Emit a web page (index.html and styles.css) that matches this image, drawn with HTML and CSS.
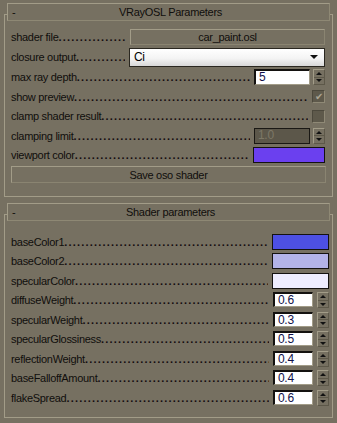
FILE: index.html
```html
<!DOCTYPE html>
<html lang="en">

<head>
  <meta charset="UTF-8">
  <meta name="viewport" content="width=device-width, initial-scale=1.0">
  <title>VRayOSL</title>
  <link rel="stylesheet" href="styles.css">
</head>

<body>
  <div class="rollout">
    <div class="rollout-head">
      <span class="toggle">-</span>
      <span class="title">VRayOSL Parameters</span>
    </div>
    <div class="rollout-body main">
      <div class="row">
        <span class="label">shader file</span><span class="dots"></span>
        <button class="btn file-btn">car_paint.osl</button>
      </div>
      <div class="row">
        <span class="label">closure output</span><span class="dots"></span>
        <div class="dropdown"><span>Ci</span><span class="drop-arrow"></span></div>
      </div>
      <div class="row">
        <span class="label">max ray depth</span><span class="dots"></span>
        <div class="spinner wide">
          <span class="field">5</span>
          <span class="spin"><span class="up"></span><span class="down"></span></span>
        </div>
      </div>
      <div class="row">
        <span class="label">show preview</span><span class="dots"></span>
        <span class="check checked">&#10004;</span>
      </div>
      <div class="row">
        <span class="label">clamp shader result</span><span class="dots"></span>
        <span class="check"></span>
      </div>
      <div class="row">
        <span class="label">clamping limit</span><span class="dots"></span>
        <div class="spinner wide disabled">
          <span class="field">1.0</span>
          <span class="spin"><span class="up"></span><span class="down"></span></span>
        </div>
      </div>
      <div class="row">
        <span class="label">viewport color</span><span class="dots"></span>
        <span class="swatch wide" style="background:#6b40ef"></span>
      </div>
      <button class="btn save-btn">Save oso shader</button>
    </div>
  </div>

  <div class="rollout second">
    <div class="rollout-head">
      <span class="toggle">-</span>
      <span class="title">Shader parameters</span>
    </div>
    <div class="rollout-body params">
      <div class="row">
        <span class="label">baseColor1</span><span class="dots"></span>
        <span class="swatch" style="background:#4d50e3"></span>
      </div>
      <div class="row">
        <span class="label">baseColor2</span><span class="dots"></span>
        <span class="swatch" style="background:#b3b3e8"></span>
      </div>
      <div class="row">
        <span class="label">specularColor</span><span class="dots"></span>
        <span class="swatch" style="background:#eeedff"></span>
      </div>
      <div class="row">
        <span class="label">diffuseWeight</span><span class="dots"></span>
        <div class="spinner"><span class="field">0.6</span><span class="spin"><span class="up"></span><span class="down"></span></span></div>
      </div>
      <div class="row">
        <span class="label">specularWeight</span><span class="dots"></span>
        <div class="spinner"><span class="field">0.3</span><span class="spin"><span class="up"></span><span class="down"></span></span></div>
      </div>
      <div class="row">
        <span class="label">specularGlossiness</span><span class="dots"></span>
        <div class="spinner"><span class="field">0.5</span><span class="spin"><span class="up"></span><span class="down"></span></span></div>
      </div>
      <div class="row">
        <span class="label">reflectionWeight</span><span class="dots"></span>
        <div class="spinner"><span class="field">0.4</span><span class="spin"><span class="up"></span><span class="down"></span></span></div>
      </div>
      <div class="row">
        <span class="label">baseFalloffAmount</span><span class="dots"></span>
        <div class="spinner"><span class="field">0.4</span><span class="spin"><span class="up"></span><span class="down"></span></span></div>
      </div>
      <div class="row">
        <span class="label">flakeSpread</span><span class="dots"></span>
        <div class="spinner"><span class="field">0.6</span><span class="spin"><span class="up"></span><span class="down"></span></span></div>
      </div>
    </div>
  </div>
</body>

</html>
```

FILE: styles.css
```css
body {
  margin: 0;
  background: #767061;
  font: 11px "Liberation Sans", Arial, sans-serif;
  letter-spacing: -0.3px;
  color: #100e0c;
}

.rollout {
  margin: 14px 4px 0;
  border: 1px solid #a29c88;
}

.rollout.second {
  margin-top: 17px;
}

.rollout-head {
  display: flex;
  align-items: center;
  height: 16px;
  margin: -12px 2px 0;
  background: #767061;
  border: 1px solid #a29c88;
  border-right-color: #8e8874;
  border-bottom-color: #8e8874;
}

.toggle {
  width: 0;
  padding-left: 4px;
  white-space: nowrap;
}

.title {
  flex: 1;
  text-align: center;
}

.rollout-body {
  padding: 6px 6px 13px;
}

.main .row {
  height: 20px;
  padding-right: 1px;
}

.main .row:nth-child(n+4) {
  height: 19.5px;
}

.params {
  padding: 11px 3px 9px 6px;
}

.params .row {
  height: 19.5px;
}

.row {
  display: flex;
  align-items: center;
}

.label {
  white-space: nowrap;
}

/* dotted leader made of periods, cut off where the control starts */
.dots {
  flex: 1;
  min-width: 0;
  margin-right: 4px;
  overflow: hidden;
  white-space: nowrap;
  letter-spacing: 1.2px;
  color: #140c10;
  font-weight: bold;
}

.dots::before {
  content: "..........................................................................";
}

.btn {
  font: inherit;
  letter-spacing: inherit;
  color: inherit;
  background: #767061;
  border: 1px solid #a29c88;
  border-right-color: #8a8471;
  border-bottom-color: #8a8471;
  padding: 0;
}

.file-btn {
  width: 195px;
  height: 16px;
  margin-top: -1px;
}

.save-btn {
  display: block;
  width: 100%;
  height: 17px;
  margin-top: 1px;
}

.dropdown {
  display: flex;
  align-items: center;
  justify-content: space-between;
  box-sizing: border-box;
  width: 196px;
  height: 19px;
  padding: 0 4px;
  border: 1px solid #2a2720;
  background: linear-gradient(#ffffff, #f4f4f4 55%, #d8d8d8);
  color: #000;
  font-size: 12px;
}

.drop-arrow {
  border-left: 4px solid transparent;
  border-right: 4px solid transparent;
  border-top: 4px solid #111;
  margin-right: 2px;
}

.spinner {
  display: flex;
  gap: 4px;
}

.field {
  box-sizing: border-box;
  width: 40px;
  height: 15px;
  padding-left: 3px;
  background: #fff;
  border-top: 2px solid #141210;
  border-left: 2px solid #141210;
  border-right: 1px solid #a29c88;
  border-bottom: 1px solid #a29c88;
  font-size: 12px;
  line-height: 12px;
  color: #10104a;
}

.spinner.wide .field {
  width: 56px;
  height: 16px;
}

.spinner.wide {
  gap: 3px;
}

.spinner.disabled .field {
  background: #5c574a;
  border: 1px solid #1a1814;
  color: #7d7867;
}

.spin {
  box-sizing: border-box;
  display: flex;
  flex-direction: column;
  width: 12px;
  height: 16px;
  border: 1px solid #a29c88;
  border-right-color: #5d5849;
  border-bottom-color: #5d5849;
}

.spin span {
  flex: 1;
  display: flex;
  align-items: center;
  justify-content: center;
}

.spin .up {
  border-bottom: 1px solid #5d5849;
}

.spin .up::after,
.spin .down::after {
  content: "";
  border-left: 3px solid transparent;
  border-right: 3px solid transparent;
}

.spin .up::after {
  border-bottom: 3px solid #111;
}

.spin .down::after {
  border-top: 3px solid #111;
}

.check {
  box-sizing: border-box;
  width: 13px;
  height: 13px;
  background: #5e594b;
  border: 1px solid #8f8976;
  border-top-color: #4c483c;
  border-left-color: #4c483c;
  color: #aaa493;
  font-size: 10px;
  line-height: 11px;
  text-align: center;
  letter-spacing: 0;
}

.swatch {
  box-sizing: border-box;
  width: 57px;
  height: 16px;
  border: 1px solid #141210;
}

.swatch.wide {
  width: 72px;
}
```
